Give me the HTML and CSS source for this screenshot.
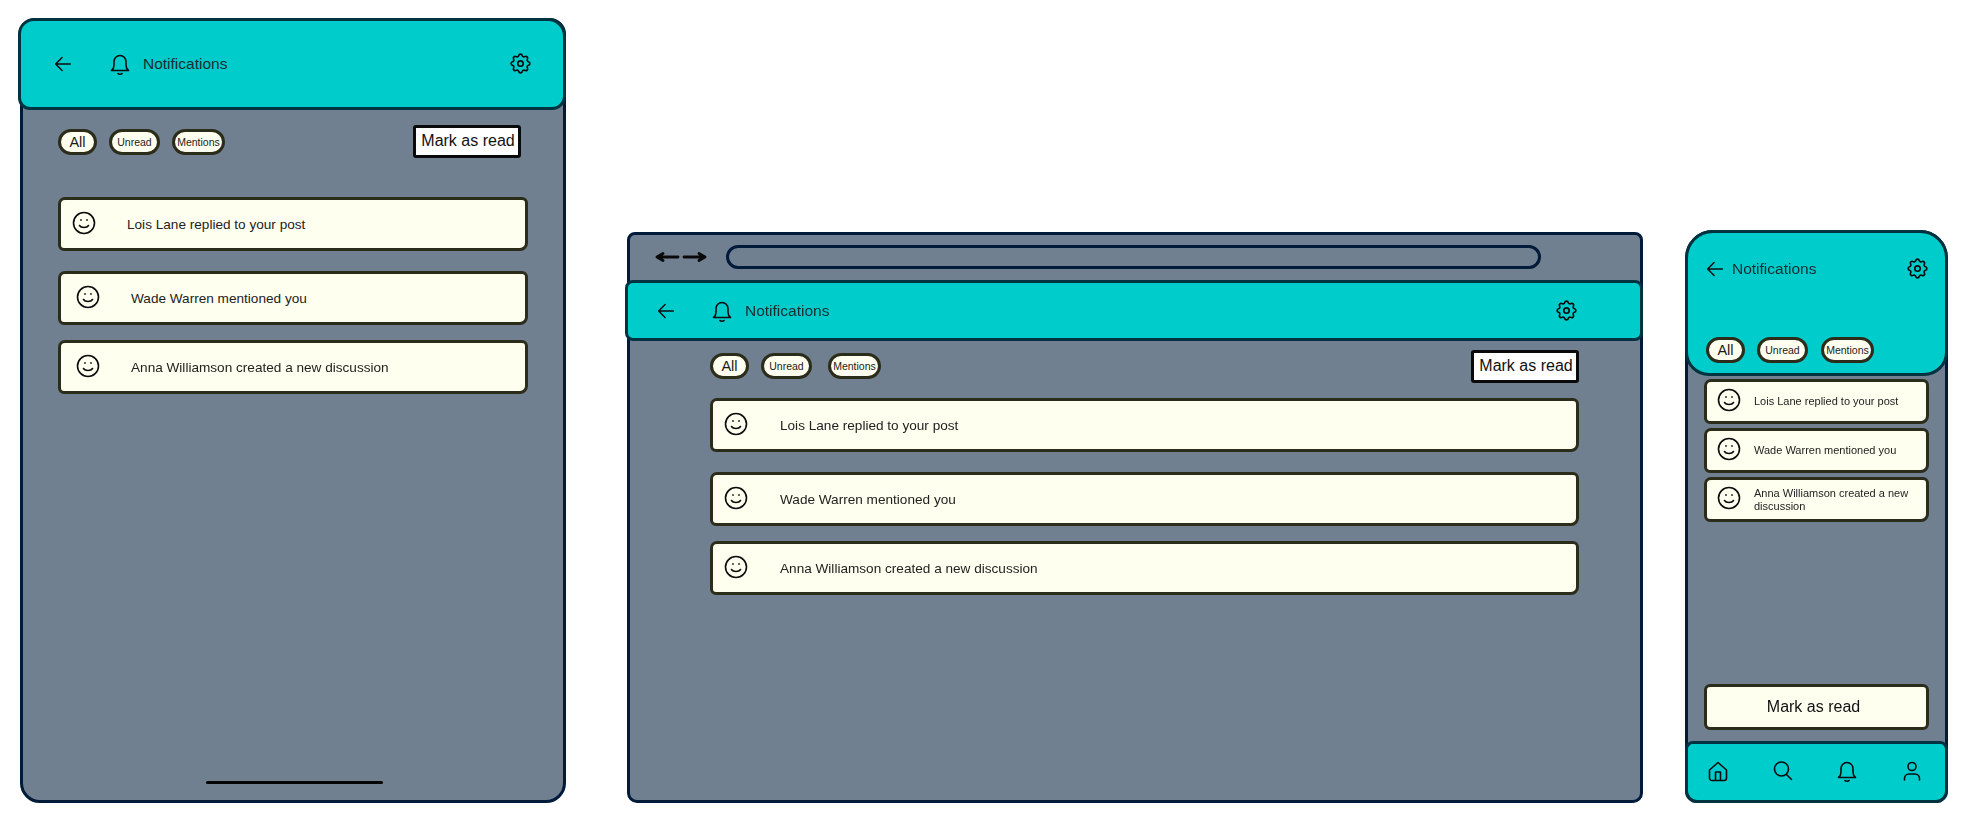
FILE: index.html
```html
<!DOCTYPE html>
<html lang="en">
<head>
  <meta charset="UTF-8">
  <title>Notifications wireframes</title>
  <link rel="stylesheet" href="styles.css">
</head>
<body>
  <svg class="sprite" width="0" height="0">
    <defs>
      <symbol id="i-back" viewBox="0 0 24 24"><path d="M20 12H4M11 5l-7 7 7 7"/></symbol>
      <symbol id="i-bell" viewBox="0 0 24 24"><path d="M3.500 18.500c1.700-1.300 2.500-3 2.500-5.500V9.500a6 6 0 0 1 12 0V13c0 2.500.8 4.200 2.500 5.500zM10 21.500c.6 1 3.400 1 4 0"/></symbol>
      <symbol id="i-gear" viewBox="0 0 24 24"><path d="M10.325 4.317c.426-1.756 2.924-1.756 3.350 0a1.724 1.724 0 0 0 2.573 1.066c1.543-.94 3.310.826 2.370 2.370a1.724 1.724 0 0 0 1.065 2.572c1.756.426 1.756 2.924 0 3.350a1.724 1.724 0 0 0-1.066 2.573c.94 1.543-.826 3.310-2.370 2.370a1.724 1.724 0 0 0-2.572 1.065c-.426 1.756-2.924 1.756-3.350 0a1.724 1.724 0 0 0-2.573-1.066c-1.543.94-3.310-.826-2.370-2.370a1.724 1.724 0 0 0-1.065-2.572c-1.756-.426-1.756-2.924 0-3.350a1.724 1.724 0 0 0 1.066-2.573c-.94-1.543.826-3.310 2.370-2.370.996.608 2.296.07 2.572-1.065z"/><circle cx="12" cy="12" r="2.600"/></symbol>
      <symbol id="i-smile" viewBox="0 0 24 24"><circle cx="12" cy="12" r="10.500"/><path d="M7.500 14.500c1.500 2.600 7.500 2.600 9 0M9 8.800v.4M15 8.800v.4"/></symbol>
      <symbol id="i-home" viewBox="0 0 24 24"><path d="M3.500 11 12 3.500 20.500 11v8a2.500 2.500 0 0 1-2.500 2.500H6A2.500 2.500 0 0 1 3.500 19zM9.500 21.500V13h5v8.500"/></symbol>
      <symbol id="i-search" viewBox="0 0 24 24"><circle cx="10.500" cy="10" r="7"/><path d="m15.500 15.500 5 5"/></symbol>
      <symbol id="i-user" viewBox="0 0 24 24"><circle cx="12" cy="7.500" r="4"/><path d="M4.500 21v-1.500a4.500 4.500 0 0 1 4.500-4.500h6a4.500 4.500 0 0 1 4.500 4.500V21"/></symbol>
    </defs>
  </svg>

  <div class="desktop">
    <!-- tablet -->
    <section class="frame frame-tablet">
      <header class="topbar">
        <div class="topbar-row">
          <svg class="icon back-icon"><use href="#i-back"/></svg>
          <svg class="icon bell-icon"><use href="#i-bell"/></svg>
          <span class="title">Notifications</span>
          <svg class="icon gear-icon"><use href="#i-gear"/></svg>
        </div>
      </header>
      <div class="content">
        <div class="filters">
          <span class="chip chip-all">All</span>
          <span class="chip chip-unread">Unread</span>
          <span class="chip chip-mentions">Mentions</span>
          <button class="mark-btn">Mark as read</button>
        </div>
        <div class="list">
          <div class="card card-first">
            <svg class="icon smile-icon"><use href="#i-smile"/></svg>
            <span class="card-text">Lois Lane replied to your post</span>
          </div>
          <div class="card">
            <svg class="icon smile-icon"><use href="#i-smile"/></svg>
            <span class="card-text">Wade Warren mentioned you</span>
          </div>
          <div class="card card-last">
            <svg class="icon smile-icon"><use href="#i-smile"/></svg>
            <span class="card-text">Anna Williamson created a new discussion</span>
          </div>
        </div>
      </div>
      <div class="home-bar"></div>
    </section>

    <!-- desktop browser -->
    <section class="frame frame-browser">
      <div class="browser-bar">
        <svg class="nav-arrows" viewBox="0 0 52 10">
          <path d="M2 5h21M8 1.500 2 5l6 3.500M29 5h21M44 1.500 50 5l-6 3.500"/>
        </svg>
        <div class="url-bar"></div>
      </div>
      <header class="topbar">
        <div class="topbar-row">
          <svg class="icon back-icon"><use href="#i-back"/></svg>
          <svg class="icon bell-icon"><use href="#i-bell"/></svg>
          <span class="title">Notifications</span>
          <svg class="icon gear-icon"><use href="#i-gear"/></svg>
        </div>
      </header>
      <div class="content">
        <div class="filters">
          <span class="chip chip-all">All</span>
          <span class="chip chip-unread">Unread</span>
          <span class="chip chip-mentions">Mentions</span>
          <button class="mark-btn">Mark as read</button>
        </div>
        <div class="list">
          <div class="card">
            <svg class="icon smile-icon"><use href="#i-smile"/></svg>
            <span class="card-text">Lois Lane replied to your post</span>
          </div>
          <div class="card">
            <svg class="icon smile-icon"><use href="#i-smile"/></svg>
            <span class="card-text">Wade Warren mentioned you</span>
          </div>
          <div class="card card-last">
            <svg class="icon smile-icon"><use href="#i-smile"/></svg>
            <span class="card-text">Anna Williamson created a new discussion</span>
          </div>
        </div>
      </div>
    </section>

    <!-- phone -->
    <section class="frame frame-phone">
      <header class="topbar">
        <div class="topbar-row">
          <svg class="icon back-icon"><use href="#i-back"/></svg>
          <span class="title">Notifications</span>
          <svg class="icon gear-icon"><use href="#i-gear"/></svg>
        </div>
        <div class="filters">
          <span class="chip chip-all">All</span>
          <span class="chip chip-unread">Unread</span>
          <span class="chip chip-mentions">Mentions</span>
        </div>
      </header>
      <div class="content">
        <div class="list">
          <div class="card">
            <svg class="icon smile-icon"><use href="#i-smile"/></svg>
            <span class="card-text">Lois Lane replied to your post</span>
          </div>
          <div class="card">
            <svg class="icon smile-icon"><use href="#i-smile"/></svg>
            <span class="card-text">Wade Warren mentioned you</span>
          </div>
          <div class="card">
            <svg class="icon smile-icon"><use href="#i-smile"/></svg>
            <span class="card-text">Anna Williamson created a new discussion</span>
          </div>
        </div>
        <button class="mark-btn">Mark as read</button>
      </div>
      <nav class="tabbar">
        <svg class="icon"><use href="#i-home"/></svg>
        <svg class="icon"><use href="#i-search"/></svg>
        <svg class="icon"><use href="#i-bell"/></svg>
        <svg class="icon"><use href="#i-user"/></svg>
      </nav>
    </section>
  </div>
</body>
</html>
```

FILE: styles.css
```css
* {
  margin: 0;
  padding: 0;
  box-sizing: border-box;
}

body {
  font-family: 'Liberation Sans', Arial, sans-serif;
  background: #fff;
  color: #1a1a1a;
  overflow: hidden;
}

.sprite {
  position: absolute;
}

.desktop {
  display: flex;
  align-items: flex-end;
  height: 803px;
  padding-left: 20px;
  filter: blur(0.4px);
}

.icon {
  width: 24px;
  height: 24px;
  flex: none;
  fill: none;
  stroke: #0c0c0c;
  stroke-width: 1.6;
  stroke-linecap: round;
  stroke-linejoin: round;
}

/* frames */
.frame {
  display: flex;
  flex-direction: column;
  background: #708090;
  border: 3px solid #001a3a;
}

.frame-tablet {
  width: 546px;
  height: 785px;
  border-radius: 16px 16px 20px 20px;
  margin-right: 61px;
}

.frame-browser {
  width: 1016px;
  height: 571px;
  border-radius: 8px 8px 10px 10px;
  margin-right: 42px;
}

.frame-phone {
  width: 263px;
  height: 573px;
  border-radius: 28px 28px 12px 12px;
}

/* teal header */
.topbar {
  flex: none;
  background: #00cccc;
  border: 3px solid #00323f;
  margin: -3px -3px 0;
}

.topbar-row {
  display: flex;
  align-items: center;
}

.back-icon {
  width: 22px;
  height: 22px;
}

.title {
  font-size: 15.5px;
  color: #1c2b30;
}

.gear-icon {
  width: 25px;
  height: 25px;
  margin-left: auto;
}

.frame-tablet .topbar {
  height: 92px;
  margin-left: -5px;
  border-radius: 16px 18px 14px 12px;
  padding: 30px 30px 0 31px;
}

.frame-tablet .bell-icon,
.frame-browser .bell-icon {
  margin-left: 34px;
  margin-right: 11px;
}

.frame-browser .topbar {
  height: 61px;
  margin-left: -5px;
  border-radius: 8px;
  padding: 15px 61px 0 27px;
}

.frame-browser .bell-icon {
  margin-left: 33px;
}

.frame-phone .topbar {
  height: 146px;
  border-radius: 28px 28px 24px 24px;
  padding: 23px 15px 0 16px;
}

.frame-phone .title {
  margin-left: 6px;
}

/* filter row */
.filters {
  display: flex;
  align-items: center;
  height: 32px;
}

.chip {
  display: flex;
  align-items: center;
  justify-content: center;
  height: 26px;
  background: #fffff0;
  border: 3px solid #2c2c1a;
  border-radius: 13px;
  font-size: 10.5px;
  color: #1a1a1a;
}

.chip-all {
  width: 39px;
  font-size: 14.5px;
  margin-right: 12px;
}

.chip-unread {
  width: 51px;
  margin-right: 12px;
}

.chip-mentions {
  width: 53px;
}

.mark-btn {
  background: #fff;
  border: 3px solid #0a0a0a;
  border-radius: 3px;
  font-family: inherit;
  font-size: 16px;
  color: #111;
  width: 108px;
  height: 33px;
  flex: none;
  margin-left: auto;
  padding-left: 2px;
}

.content {
  flex: 1;
  display: flex;
  flex-direction: column;
}

.frame-tablet .content {
  padding: 16px 0 0 35px;
}

.frame-tablet .filters {
  width: 463px;
}

.frame-tablet .mark-btn {
  margin-bottom: 2px;
}

.frame-browser .content {
  padding: 9px 0 0 80px;
}

.frame-browser .filters {
  width: 869px;
}

.frame-browser .chip-unread {
  margin-right: 16px;
}

.frame-browser .list {
  margin-top: 16px;
  width: 869px;
}

.frame-browser .card-text {
  margin-left: 32px;
}

/* cards */
.list {
  display: flex;
  flex-direction: column;
  gap: 20px;
  margin-top: 39px;
  width: 470px;
}

.card {
  display: flex;
  align-items: center;
  height: 54px;
  background: #fffff0;
  border: 3px solid #2c2c1a;
  border-radius: 7px 6px 8px 6px;
  padding: 0 0 0 11px;
}

.card-last {
  margin-top: -5px;
}

.frame-tablet .card:not(.card-first) {
  padding-left: 15px;
}

.smile-icon {
  margin-bottom: 3px;
}

.card-text {
  font-size: 13.6px;
  margin-left: 31px;
  color: #222;
}

/* phone specifics */
.frame-phone .content {
  padding: 3px 16px 11px;
}

.frame-phone .topbar .filters {
  margin-top: 53px;
  margin-left: 2px;
}

.frame-phone .chip-unread {
  margin-right: 13px;
}

.frame-phone .list {
  width: auto;
  margin-top: 0;
  gap: 4px;
}

.frame-phone .card {
  height: 45px;
  padding-left: 10px;
}

.frame-phone .card-text {
  font-size: 11px;
  line-height: 13px;
  margin-left: 13px;
}

.frame-phone .mark-btn {
  width: 100%;
  height: 46px;
  margin-top: auto;
  padding: 0 6px 0 0;
  background: #fffff0;
  border-color: #2c2c1a;
  border-radius: 6px;
}

.home-bar {
  align-self: center;
  width: 177px;
  height: 3px;
  background: #050505;
  border-radius: 2px;
  margin: 0 0 16px 2px;
}

.tabbar {
  flex: none;
  display: flex;
  align-items: center;
  justify-content: space-between;
  height: 62px;
  margin: 0 -3px -3px;
  padding: 0 21px 2px 18px;
  background: #00cccc;
  border: 3px solid #00323f;
  border-radius: 8px 8px 12px 12px;
}

/* browser chrome */
.browser-bar {
  flex: none;
  display: flex;
  align-items: center;
  height: 48px;
  padding: 0 0 5px 25px;
}

.nav-arrows {
  width: 52px;
  height: 10px;
  fill: none;
  stroke: #0a0a0a;
  stroke-width: 2.8;
  stroke-linecap: round;
  stroke-linejoin: round;
}

.url-bar {
  width: 815px;
  height: 24px;
  margin-left: 19px;
  border: 3px solid #001a3a;
  border-radius: 12px;
}
```
